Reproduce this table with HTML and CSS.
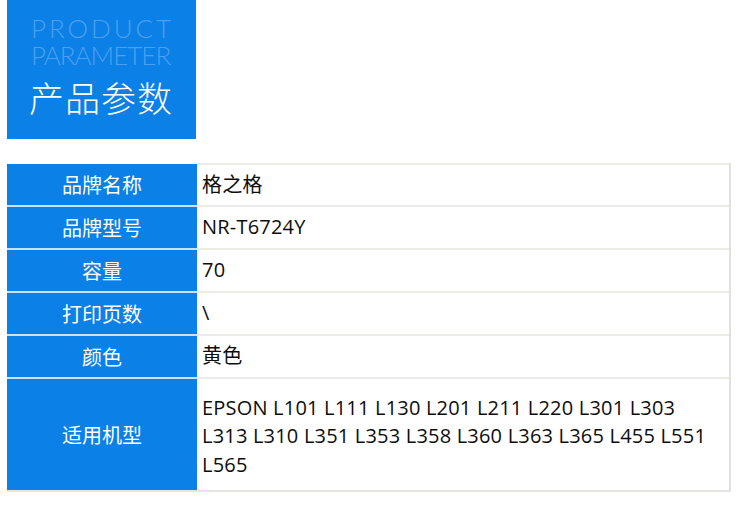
FILE: index.html
```html
<!DOCTYPE html>
<html lang="zh">
<head>
<meta charset="utf-8">
<link rel="stylesheet" href="styles.css">
</head>
<body>
<div class="page">
  <div class="banner">
    <div class="en"><span class="en1">PRODUCT</span><br><span class="en2">PARAMETER</span></div>
    <div class="cn">产品参数</div>
  </div>
  <table class="params">
    <tr><th>品牌名称</th><td>格之格</td></tr>
    <tr><th>品牌型号</th><td>NR-T6724Y</td></tr>
    <tr><th>容量</th><td>70</td></tr>
    <tr><th>打印页数</th><td>\</td></tr>
    <tr><th>颜色</th><td>黄色</td></tr>
    <tr class="tall"><th>适用机型</th><td>EPSON L101 L111 L130 L201 L211 L220 L301 L303 L313 L310 L351 L353 L358 L360 L363 L365 L455 L551 L565</td></tr>
  </table>
</div>
</body>
</html>
```
FILE: styles.css
```css
html, body { margin: 0; padding: 0; background: #fff; }
.page {
  width: 750px; height: 516px;
  padding: 0 0 0 7px;
  box-sizing: border-box;
  font-family: "Open Sans", "Noto Sans CJK SC", sans-serif;
}
.banner {
  width: 189px; height: 139px;
  background: #0b80e6;
  box-sizing: border-box;
  padding: 15px 0 0 24px;
}
.en {
  color: #4d9ff0;
  font-family: "Lato", "Open Sans", sans-serif;
  font-weight: 300;
  font-size: 26px;
  line-height: 27px;
}
.en1 { letter-spacing: 2.9px; }
.en2 { letter-spacing: -1px; }
.cn {
  color: #fff;
  font-family: "Noto Sans CJK SC", sans-serif;
  font-weight: 300;
  font-size: 35px;
  line-height: 44px;
  margin-top: 6px;
  margin-left: -2px;
  letter-spacing: 1px;
}
.params {
  margin-top: 24px;
  width: 724px;
  border-collapse: collapse;
  font-size: 20px;
}
.params th {
  width: 190px;
  background: #0b80e6;
  color: #fff;
  font-weight: 400;
  font-family: "Noto Sans CJK SC", sans-serif;
  text-align: center;
  height: 41px;
  padding: 0;
  border-top: 2px solid #c9e2f8;
}
.params tr:first-child th { border-top: none; }
.params tr:first-child td { border-top: 2px solid #ecece6; }
.params td {
  color: #0d0d0d;
  padding: 0 0 0 5px;
  border-top: 2px solid #ecece6;
  border-right: 2px solid #e2e2da;
  line-height: 28.5px;
  letter-spacing: 0.2px;
  font-family: "Open Sans", "Noto Sans CJK SC", sans-serif;
}
.params tr.tall th { height: 111px; border-bottom: 2px solid #e6e6e0; }
.params tr.tall td { height: 107px; border-bottom: 2px solid #e6e6e0; padding: 4px 12px 0 5px; }
```
